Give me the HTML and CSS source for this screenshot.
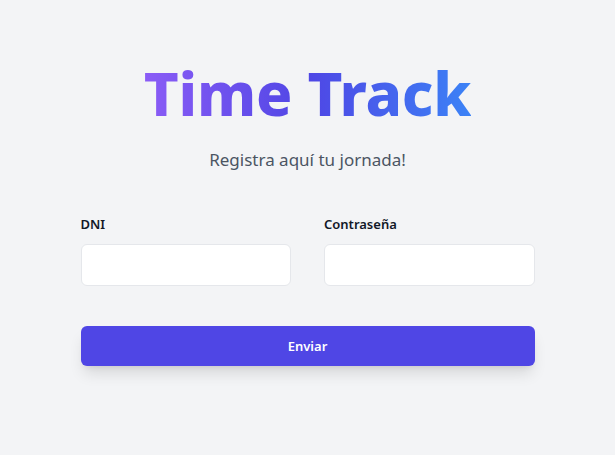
FILE: index.html
```html
<!DOCTYPE html>
<html lang="es">
<head>
<meta charset="utf-8">
<title>Time Track</title>
<link rel="stylesheet" href="styles.css">
</head>
<body>
<main class="page">
  <h1 class="title">Time Track</h1>
  <p class="subtitle">Registra aquí tu jornada!</p>
  <form class="form">
    <div class="fields">
      <div class="field">
        <label class="label" for="dni">DNI</label>
        <input class="input" id="dni" type="text">
      </div>
      <div class="field">
        <label class="label" for="pass">Contraseña</label>
        <input class="input" id="pass" type="password">
      </div>
    </div>
    <button class="button" type="button">Enviar</button>
  </form>
</main>
</body>
</html>
```
FILE: styles.css
```css
* { box-sizing: border-box; }
html, body { margin: 0; padding: 0; }
body {
  background: #f3f4f6;
  font-family: "Noto Sans", "Open Sans", sans-serif;
  color: #111827;
  width: 615px;
  height: 455px;
  overflow: hidden;
}
.page {
  display: flex;
  flex-direction: column;
  align-items: center;
  padding-top: 63px;
}
.title {
  margin: 0;
  font-size: 60px;
  line-height: 60px;
  font-weight: 800;
  letter-spacing: -0.2px;
  background: linear-gradient(90deg, #8b5cf6 0%, #4f46e5 50%, #3b82f6 100%);
  -webkit-background-clip: text;
  background-clip: text;
  color: transparent;
}
.subtitle {
  margin: 23px 0 0;
  font-size: 17px;
  line-height: 28px;
  color: #4b5563;
}
.form {
  width: 454px;
  margin-top: 40px;
  display: flex;
  flex-direction: column;
}
.fields {
  display: grid;
  grid-template-columns: minmax(0, 1fr) minmax(0, 1fr);
  column-gap: 33px;
}
.field {
  display: flex;
  flex-direction: column;
  min-width: 0;
}
.label {
  font-size: 13px;
  line-height: 20px;
  font-weight: 600;
  color: #111827;
  margin-bottom: 10px;
}
.input {
  width: 100%;
  min-width: 0;
  height: 42px;
  border: 1px solid #e5e7eb;
  border-radius: 6px;
  background: #fff;
  font: inherit;
  padding: 0 12px;
  outline: none;
}
.button {
  margin-top: 40px;
  height: 40px;
  border: none;
  border-radius: 6px;
  background: #4f46e5;
  color: #fff;
  font-family: inherit;
  font-size: 13px;
  font-weight: 600;
  box-shadow: 0 10px 15px -3px rgba(0,0,0,0.12), 0 4px 6px -4px rgba(0,0,0,0.1);
}
```
